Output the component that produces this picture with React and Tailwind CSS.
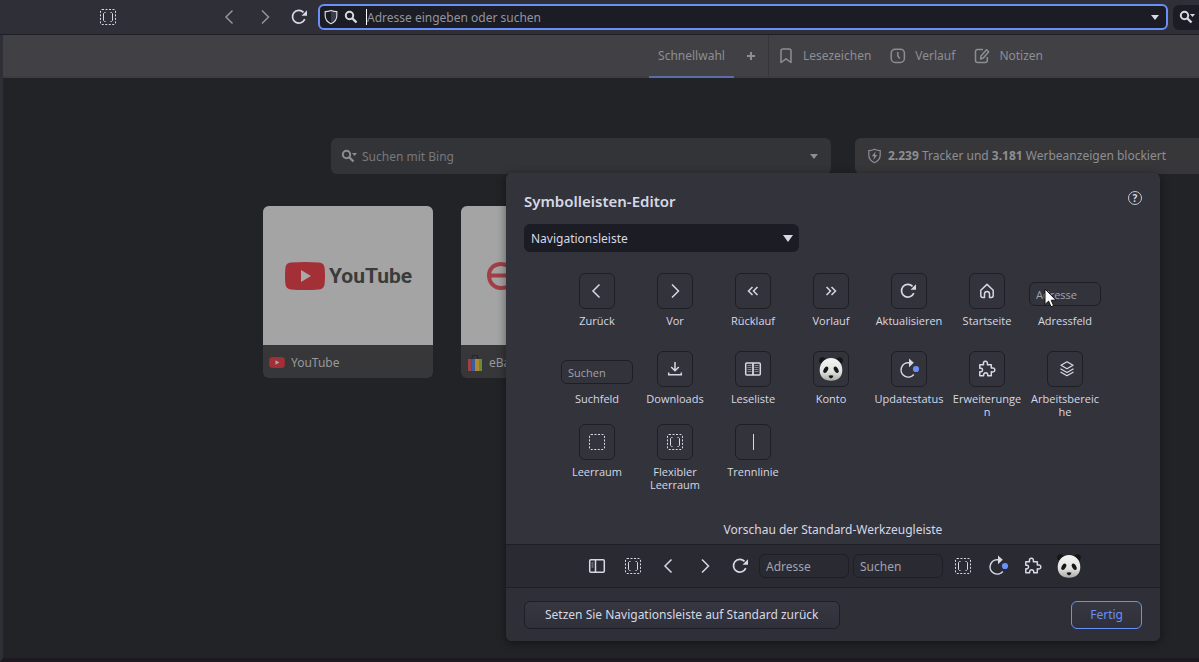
import React from "react";

function Svg({ size = 18, children, className = "" }) {
  return (
    <svg width={size} height={size} viewBox="0 0 18 18" fill="none" stroke="currentColor" strokeWidth="1.5" className={"shrink-0 " + className} aria-hidden="true">
      {children}
    </svg>
  );
}

const Back = () => <Svg><path d="M11.500 2.500 5 9l6.500 6.500" /></Svg>;
const Forward = () => <Svg><path d="M6 2.500 12.500 9 6 15.500" /></Svg>;
const Rewind = () => <Svg><path d="M8.500 5 4.500 9l4 4M13.500 5l-4 4 4 4" /></Svg>;
const FastForward = () => <Svg><path d="M4.500 5l4 4-4 4M9.500 5l4 4-4 4" /></Svg>;
const Reload = () => (
  <Svg>
    <path d="M13.800 11.200A6.400 6.400 0 1 1 12.500 4.300" strokeWidth="1.700" />
    <path d="M16 2.300v5.500h-5.500z" fill="currentColor" stroke="none" />
  </Svg>
);
const Home = () => (
  <Svg><path d="M2.800 8.200 9 2.400l6.200 5.800v5.300a2 2 0 0 1-2 2h-1.700v-3.500a2.500 2.500 0 0 0-5 0v3.500H4.800a2 2 0 0 1-2-2z" strokeLinejoin="round" /></Svg>
);
const Download = () => <Svg><path d="M9 2v8.500M5.200 7 9 10.800 12.800 7M2.700 12.500v2.200h12.600v-2.200" /></Svg>;
const Book = () => (
  <Svg>
    <rect x="1.700" y="3" width="14.600" height="12" rx="1" />
    <path d="M9 3v12" strokeWidth="1.800" />
    <path d="M3.500 5.500h4M3.500 7.500h4M3.500 9.500h4M3.500 11.500h4M10.500 5.500h4M10.500 7.500h4M10.500 9.500h4M10.500 11.500h4" strokeWidth="1" opacity=".5" />
  </Svg>
);
const Update = () => (
  <Svg className="overflow-visible">
    <path d="M9.500 2.800A7.200 7.200 0 1 0 13.800 14.500" />
    <path d="M9-1.500 13.800 2.700 9 7.200z" fill="currentColor" stroke="none" />
    <circle cx="16" cy="9" r="3.100" fill="#6b8ff8" stroke="none" />
  </Svg>
);
const Puzzle = () => (
  <Svg>
    <path d="M1.800 4.700h3.800C4.900 2.600 5.900 1.300 7.400 1.300s2.500 1.300 1.900 3.400h4v3.400c2-.6 3.500.2 3.500 1.800s-1.500 2.400-3.500 1.800v4H9.700c.3-1.900-.6-3-2-3s-2.300 1.100-2 3H1.800v-4c1.700.3 2.700-.5 2.700-1.800S3.500 7.900 1.800 8.200z" strokeLinejoin="round" />
  </Svg>
);
const Layers = () => (
  <Svg>
    <path d="M11 1.800 17 5.300 11 8.800 5 5.300zM4.500 8.800 11 12.500l6.500-3.700M4.500 12 11 15.700l6.500-3.700" strokeWidth="1.300" strokeLinejoin="round" />
  </Svg>
);
const Space = () => <Svg><rect x="1.500" y="1.500" width="15" height="15" rx="1.500" strokeWidth="1" strokeDasharray="2 1.500" /></Svg>;
const FlexSpace = () => (
  <Svg>
    <rect x="1.500" y="1.500" width="15" height="15" rx="1.500" strokeWidth="1" strokeDasharray="2 1.500" />
    <path d="M6.500 4.500h-1l-1 1v7l1 1h1M11.500 4.500h1l1 1v7l-1 1h-1" strokeWidth="1" />
  </Svg>
);
const Divider = () => <Svg><path d="M9.500 1v16" strokeWidth="1" /></Svg>;
const Panel = () => (
  <Svg>
    <rect x="1.700" y="2.700" width="14.600" height="12.600" rx="1.200" />
    <path d="M7.500 3v12" />
    <path d="M3.500 6h2M3.500 8h2M3.500 10h2" strokeWidth="1" opacity=".65" />
  </Svg>
);
const Panda = () => (
  <svg width="26" height="26" viewBox="0 0 26 26" className="shrink-0" aria-hidden="true">
    <defs>
      <linearGradient id="fur" x1="0" y1="0" x2="0" y2="1">
        <stop offset="0" stopColor="#f4f4f4" />
        <stop offset=".6" stopColor="#e2e2e0" />
        <stop offset="1" stopColor="#a9a9a6" />
      </linearGradient>
    </defs>
    <circle cx="4.500" cy="4.500" r="3.300" fill="#15151a" />
    <circle cx="21.500" cy="4.500" r="3.300" fill="#15151a" />
    <path d="M13 2C19.500 2 24.300 7 24.300 14S20 24.800 13 24.800 1.700 21 1.700 14 6.500 2 13 2z" fill="url(#fur)" />
    <ellipse cx="7.800" cy="13.800" rx="2" ry="3.500" transform="rotate(30 7.800 13.800)" fill="#17171a" />
    <ellipse cx="18.200" cy="13.800" rx="2" ry="3.500" transform="rotate(-30 18.200 13.800)" fill="#17171a" />
    <path d="M10.500 19.800q2.500-1.200 5 0-.5 2.200-2.500 2.800-2-.6-2.500-2.800z" fill="#17171a" />
  </svg>
);
const Magnifier = ({ caret }) => (
  <svg width={caret ? 16 : 14} height="14" viewBox={caret ? "0 0 16 14" : "0 0 14 14"} fill="none" stroke="currentColor" className="shrink-0" aria-hidden="true">
    <circle cx="5.500" cy="5.500" r="3.700" strokeWidth="2" />
    <path d="m8 8 4.500 4.500" strokeWidth="2.400" />
    {caret && <path d="M11 4h5l-2.500 3z" fill="currentColor" stroke="none" />}
  </svg>
);
const Shield = () => (
  <svg width="14" height="16" viewBox="0 0 14 16" className="shrink-0" fill="none" aria-hidden="true">
    <path d="M7 2.500v11.300C3.800 12.300 2 9.500 2 6.500V3.300z" fill="#3a3c47" transform="translate(14 0) scale(-1 1)" />
    <path d="M7 1.500C9 2.300 11 2.700 12.800 2.700v4c0 3.600-2.200 6.400-5.800 8-3.600-1.600-5.800-4.400-5.800-8v-4C3 2.700 5 2.300 7 1.500z" stroke="currentColor" strokeWidth="1.200" />
  </svg>
);
const Caret = () => <svg width="8" height="5" viewBox="0 0 8 5" className="mr-px shrink-0" aria-hidden="true"><path d="M0 0h8L4 5z" fill="currentColor" /></svg>;

const FieldSample = ({ text, className = "w-[72px]" }) => (
  <input aria-label={text} placeholder={text} className={"h-6 rounded-md border border-[#1e1e27] bg-transparent px-1.5 text-[#a0a2ad] outline-none placeholder:text-[#a0a2ad] placeholder:opacity-100 " + className} />
);

const rows = [
  [
    ["Zurück", Back], ["Vor", Forward], ["Rücklauf", Rewind], ["Vorlauf", FastForward],
    ["Aktualisieren", Reload], ["Startseite", Home], ["Adressfeld", null, "Adresse"],
  ],
  [
    ["Suchfeld", null, "Suchen"], ["Downloads", Download], ["Leseliste", Book], ["Konto", Panda],
    ["Updatestatus", Update], ["Erweiterungen", Puzzle], ["Arbeitsbereiche", Layers],
  ],
  [["Leerraum", Space], ["Flexibler Leerraum", FlexSpace], ["Trennlinie", Divider]],
];

function Tool({ label, Icon, sample }) {
  return (
    <div className="relative flex w-[78px] flex-col items-center text-center font-['Open_Sans',sans-serif] text-[11px] leading-[13px]">
      {Icon ? (
        <button aria-label={label} className="flex size-9 items-center justify-center rounded-md border border-[#1e1e27]"><Icon /></button>
      ) : (
        <div className="flex h-9 items-end pb-[3px]"><FieldSample text={sample} /></div>
      )}
      <span className="mt-[5px] w-[70px] wrap-anywhere">{label}</span>
      {sample === "Adresse" && (
        <svg width="13" height="20" viewBox="0 0 13 20" className="absolute left-[18px] top-[15px]" aria-hidden="true">
          <path d="M1 1v15.500l3.600-3.400 2.400 5.600 2.600-1.100-2.400-5.400H12z" fill="#fff" stroke="#111" />
        </svg>
      )}
    </div>
  );
}

function TopBar() {
  return (
    <header className="flex h-[35px] shrink-0 items-center border-b border-[#1e1e27] bg-[#2e2f37] text-[#d6d8e4]">
      <button aria-label="Flexibler Leerraum" className="ml-[99px]"><FlexSpace /></button>
      <nav className="ml-[104px] flex gap-[17px]">
        <button aria-label="Zurück" className="text-[#92949e]"><Back /></button>
        <button aria-label="Vor" className="text-[#92949e]"><Forward /></button>
        <button aria-label="Aktualisieren"><Reload /></button>
      </nav>
      <div className="ml-[9px] flex h-[26px] flex-1 items-center rounded-md border-2 border-[#6b8ff8] bg-[#1c1c25] pl-1 pr-1.5">
        <Shield />
        <span className="ml-1.5"><Magnifier /></span>
        <span className="ml-2 h-4 w-px bg-white" />
        <input aria-label="Adresse" placeholder="Adresse eingeben oder suchen" className="min-w-0 flex-1 bg-transparent pt-0.5 text-xs outline-none placeholder:text-[#92949e] placeholder:opacity-100" />
        <Caret />
      </div>
      <button aria-label="Suchen" className="ml-[5px] flex h-[25px] w-[26px] items-center rounded-l-md bg-[#1c1c25] pl-1.5"><Magnifier caret /></button>
    </header>
  );
}

function TabBar() {
  return (
    <nav className="flex h-[43px] shrink-0 border-b-2 border-[#3d3c41] bg-[#414045] pl-[646px] text-xs text-[#8d8e92]">
      <a href="#schnellwahl" className="-mb-0.5 flex w-[85px] items-center justify-center border-b-2 border-[#5a6da8]">Schnellwahl</a>
      <button aria-label="Neue Gruppe" className="flex w-[34px] items-center justify-center">
        <svg width="8" height="8" viewBox="0 0 8 8" stroke="currentColor" strokeWidth="2"><path d="M4 0v8M0 4h8" /></svg>
      </button>
      <div className="flex items-center gap-[18px] border-l border-[#35353a] pl-2">
        <a href="#lesezeichen" className="flex items-center gap-2"><Svg><path d="M4 4a2 2 0 0 1 2-2h6a2 2 0 0 1 2 2v11.500L9 11.800l-5 3.700z" strokeLinejoin="round" /></Svg>Lesezeichen</a>
        <a href="#verlauf" className="flex items-center gap-2"><Svg><rect x="2.200" y="2.200" width="13.200" height="13.200" rx="4" /><path d="M8.800 5v4l2 2.500" /></Svg>Verlauf</a>
        <a href="#notizen" className="flex items-center gap-2"><Svg><path d="M10 2.500H4.500a2 2 0 0 0-2 2v9a2 2 0 0 0 2 2h7.800a2 2 0 0 0 2-2V10M7.500 12l.5-3 5.500-6.200 2.200 2L10.300 11z" strokeLinejoin="round" /></Svg>Notizen</a>
      </div>
    </nav>
  );
}

const PlayBadge = ({ w, h }) => (
  <svg width={w} height={h} viewBox="0 0 40 28" className="shrink-0" aria-hidden="true">
    <path d="M6 .6Q20-.6 34 .6 39.200 1 39.600 6q.8 8 0 16-.4 5-5.600 5.400-14 1.200-28 0Q.8 27 .4 22q-.8-8 0-16Q.8 1 6 .6z" fill="#a23036" />
    <path d="M16 8v12l10-6z" fill="#a9a9a9" />
  </svg>
);

function SpeedDial() {
  return (
    <main className="flex-1 pl-[260px] pt-[60px]">
      <div className="flex gap-6 pl-[68px] text-xs">
        <div className="flex h-9 w-[500px] shrink-0 items-center rounded-md bg-[#333438] pl-2.5 pr-3 text-[#8d8e92]">
          <Magnifier caret />
          <input aria-label="Suchen mit Bing" placeholder="Suchen mit Bing" className="ml-[5px] min-w-0 flex-1 bg-transparent pt-0.5 outline-none placeholder:text-[#77787c] placeholder:opacity-100" />
          <Caret />
        </div>
        <div className="flex h-9 flex-1 items-center gap-1.5 whitespace-nowrap rounded-l-md bg-[#37373a] pl-3 text-[#8d8e92]">
          <svg width="15" height="16" viewBox="0 0 15 16" fill="none" stroke="currentColor" strokeWidth="1.200" aria-hidden="true"><path d="M7.500 1.300c2 1 4 1.300 5.700 1.300v4.600c0 3.400-2.200 5.900-5.700 7.500-3.500-1.600-5.700-4.100-5.700-7.500V2.600c1.700 0 3.700-.3 5.700-1.300z" /><path d="M8.500 3.500 4.800 8.300h2.300L6.500 12l3.700-5H8z" fill="currentColor" stroke="none" /></svg>
          <p><b>2.239</b> Tracker und <b>3.181</b> Werbeanzeigen blockiert</p>
        </div>
      </div>
      <div className="mt-8 flex gap-7 text-xs text-[#98999c]">
        <a href="#youtube" className="w-[170px] overflow-hidden rounded-md bg-[#37373a]">
          <div className="flex h-[139px] items-center gap-1 bg-[#a4a4a4] pl-[22px]">
            <PlayBadge w={40} h={28} />
            <span className="font-['Roboto',sans-serif] text-[21px] font-bold text-[#3b3b3b]">YouTube</span>
          </div>
          <div className="flex h-[33px] items-center gap-1.5 pl-1.5 pt-0.5"><PlayBadge w={16} h={11} />YouTube</div>
        </a>
        <a href="#ebay" className="w-[170px] overflow-hidden rounded-md bg-[#37373a]">
          <div className="flex h-[139px] items-center bg-[#a4a4a4] pl-[26px]">
            <svg width="28" height="28" viewBox="0 0 28 28" fill="none" stroke="#a03f45" strokeWidth="4" aria-hidden="true"><path d="M2 13.500h24c0-7-5-11.500-12-11.500S2 6.500 2 13.500 7 26 14 26c6 0 10-2 11.500-6" /></svg>
          </div>
          <div className="flex h-[33px] items-center gap-[7px] pl-[7px] pt-0.5">
            <svg width="14" height="16" viewBox="0 0 14 16" aria-hidden="true"><path d="M4 4V3a3 3 0 0 1 6 0v1" fill="none" stroke="#202124" /><path fill="#9e4044" d="M0 4h3.500v12H0z" /><path fill="#3b5ba0" d="M3.500 4H7v12H3.500z" /><path fill="#ad8a2e" d="M7 4h4v12H7z" /><path fill="#6b8a36" d="M11 4h3v12h-3z" /></svg>
            eBay
          </div>
        </a>
      </div>
    </main>
  );
}

function Editor() {
  return (
    <section role="dialog" aria-label="Symbolleisten-Editor" className="absolute right-[39px] top-[173px] w-[654px] rounded-md bg-[#33333c] text-[#d6d8e4] shadow-[0_2px_10px_rgba(0,0,0,0.45)]">
      <div className="px-[18px] pt-4">
        <div className="flex items-start justify-between">
          <h1 className="text-[15px] font-semibold leading-6">Symbolleisten-Editor</h1>
          <button aria-label="Hilfe" className="mt-0.5 flex size-[14px] items-center justify-center rounded-full border border-[#c4c6d2] text-[10px] font-bold leading-none">?</button>
        </div>
        <div className="relative mt-[11px] w-[275px]">
          <select aria-label="Symbolleiste" className="h-7 w-full appearance-none rounded-md bg-[#1c1c25] px-[7px] pt-px text-xs"><option>Navigationsleiste</option></select>
          <svg width="10" height="7" viewBox="0 0 10 7" className="pointer-events-none absolute right-[6px] top-[11px]"><path d="M0 0h10L5 7z" fill="currentColor" /></svg>
        </div>
      </div>
      <div className="mt-[21px] flex flex-col pl-[52px]">
        {rows.map((row, i) => (
          <div key={i} className={["flex h-[78px]", "flex h-[73px]", "flex h-[98px]"][i]}>
            {row.map(([label, Icon, sample]) => <Tool key={label} label={label} Icon={Icon} sample={sample} />)}
          </div>
        ))}
      </div>
      <h2 className="pb-1.5 text-center text-xs leading-4">Vorschau der Standard-Werkzeugleiste</h2>
      <div className="flex h-11 items-center border-y border-[#1e1e27] bg-[#2a2a33] pl-[82px] text-xs">
        <div className="flex items-center gap-[18px]">
          <Panel /><FlexSpace /><Back /><Forward /><Reload />
        </div>
        <div className="ml-[9px] flex gap-1">
          <FieldSample text="Adresse" className="w-[90px]" /><FieldSample text="Suchen" className="w-[90px]" />
        </div>
        <div className="ml-[11px] flex items-center gap-[17px]">
          <FlexSpace /><Update /><Puzzle />
          <span className="flex w-5 justify-center"><Panda /></span>
        </div>
      </div>
      <footer className="flex items-center justify-between rounded-b-md bg-[#2f2f38] px-[18px] pb-3 pt-[13px] text-xs">
        <button className="h-7 rounded-md border border-[#1e1e27] bg-linear-to-b from-[#363740] to-[#2f3039] px-5">Setzen Sie Navigationsleiste auf Standard zurück</button>
        <button className="h-7 rounded-md border border-[#6b8ff8] bg-linear-to-b from-[#363740] to-[#2f3039] px-[18px] text-[#6b8ff8]">Fertig</button>
      </footer>
    </section>
  );
}

export default function App() {
  return (
    <div className="relative flex min-h-screen flex-col overflow-hidden bg-[#222326] font-['Noto_Sans',sans-serif]">
      <TopBar />
      <div className="flex flex-1 flex-col border-b-4 border-l-[3px] border-b-[#1f1821] border-l-[#2e2f37]">
        <TabBar />
        <SpeedDial />
      </div>
      <Editor />
    </div>
  );
}
